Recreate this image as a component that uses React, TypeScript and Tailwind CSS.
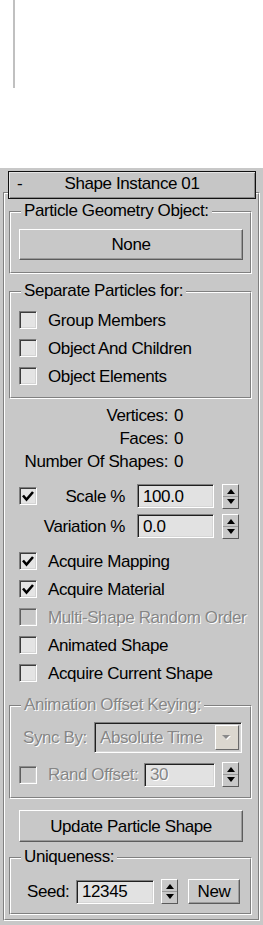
import React from "react";

const OUT = "border border-t-[#808080] border-l-[#808080] border-r-white border-b-white";
const IN = "border border-t-white border-l-white border-r-[#808080] border-b-[#808080]";
const SUNKEN =
  "border border-t-[#808080] border-l-[#808080] border-r-white border-b-white shadow-[inset_1px_1px_0_#202020,inset_-1px_-1px_0_#d6d6d6]";
const RAISED =
  "border border-t-white border-l-white border-r-[#5c5c5c] border-b-[#5c5c5c] shadow-[inset_-1px_-1px_0_#9a9a9a]";
const DIS = "text-[#868686] [text-shadow:1px_1px_0_#ffffff]";

function Group({
  legend,
  disabled,
  h,
  children,
}: {
  legend: string;
  disabled?: boolean;
  h: string;
  children: React.ReactNode;
}) {
  return (
    <div className={`relative ml-[4px] w-[243px] ${OUT}`}>
      <div className={`${h} ${IN}`}>{children}</div>
      <span
        className={`absolute left-[11px] top-[-10px] px-[3px] bg-[#c8c8c8] leading-[18px] ${
          disabled ? DIS : ""
        }`}
      >
        {legend}
      </span>
    </div>
  );
}

function Check({ on, disabled }: { on?: boolean; disabled?: boolean }) {
  return (
    <div
      className={
        disabled
          ? "relative shrink-0 w-[18px] h-[18px] border border-t-[#8c8c8c] border-l-[#8c8c8c] border-r-white border-b-white shadow-[inset_1px_1px_0_#5e5e5e,inset_-1px_-1px_0_#d2d2d2] bg-[#c8c8c8]"
          : "relative shrink-0 w-[18px] h-[18px] border border-t-[#7c7c7c] border-l-[#7c7c7c] border-r-white border-b-white shadow-[inset_1px_1px_0_#3c3c3c,inset_-1px_-1px_0_#d4d4d4] bg-[#e4e4e4]"
      }
    >
      {on && (
        <svg viewBox="0 0 18 18" className="absolute left-[-1px] top-[-1px] w-[18px] h-[18px]">
          <path d="M4 8.5 L7.5 12.5 L14 5" fill="none" stroke="#000" strokeWidth="2.6" />
        </svg>
      )}
    </div>
  );
}

function Spin() {
  return (
    <div
      className={`shrink-0 flex flex-col w-[17px] h-[25px] bg-[#c8c8c8] border border-t-white border-l-white border-r-[#5a5a5a] border-b-[#5a5a5a]`}
    >
      <div className="h-[11px] flex items-end justify-center pb-[2px]">
        <svg width="8" height="5" viewBox="0 0 8 5">
          <polygon points="0,5 4,0 8,5" fill="#000" />
        </svg>
      </div>
      <div className="h-[1px] bg-[#9a9a9a]" />
      <div className="h-[11px] flex items-start justify-center pt-[2px]">
        <svg width="8" height="5" viewBox="0 0 8 5">
          <polygon points="0,0 8,0 4,5" fill="#000" />
        </svg>
      </div>
    </div>
  );
}

function Edit({ w, disabled, children }: { w: string; disabled?: boolean; children: React.ReactNode }) {
  return (
    <div className={`shrink-0 flex items-center h-[24px] pl-[5px] bg-[#e2e2e2] ${SUNKEN} ${w}`}>
      <span className={disabled ? DIS : ""}>{children}</span>
    </div>
  );
}

function Btn({ cls, children }: { cls: string; children: React.ReactNode }) {
  return (
    <div className={`shrink-0 flex items-center justify-center bg-[#c8c8c8] ${RAISED} ${cls}`}>
      {children}
    </div>
  );
}

function Dropdown() {
  return (
    <div className={`shrink-0 flex w-[148px] h-[31px] p-[2px] bg-[#c8c8c8] ${SUNKEN}`}>
      <div className={`flex-1 flex items-center pl-[3px] ${DIS}`}>Absolute Time</div>
      <div
        className={`w-[24px] h-[25px] flex items-center justify-center bg-[#dbd7cf] border border-t-white border-l-white border-r-[#6a6a6a] border-b-[#6a6a6a]`}
      >
        <svg width="10" height="6" viewBox="0 0 10 6">
          <polygon points="1,1 9,1 5,5" fill="#ffffff" />
          <polygon points="0,0 8,0 4,4" fill="#8a8a8a" />
        </svg>
      </div>
    </div>
  );
}

export default function App() {
  const stats: [string, string][] = [
    ["Vertices:", "0"],
    ["Faces:", "0"],
    ["Number Of Shapes:", "0"],
  ];
  const checks: [string, boolean, boolean][] = [
    ["Acquire Mapping", true, false],
    ["Acquire Material", true, false],
    ["Multi-Shape Random Order", false, true],
    ["Animated Shape", false, false],
    ["Acquire Current Shape", false, false],
  ];
  return (
    <div className="w-[263px] h-[925px] overflow-hidden bg-white text-black font-['Liberation_Sans',Arial,sans-serif] text-[17px] tracking-[-0.4px] leading-none">
      <div className="h-[168px]">
        <div className="ml-[13px] w-[2px] h-[88px] bg-[#c0c0c0]" />
      </div>
      <div className="h-[757px] bg-[#c8c8c8] pt-[3px]">
        <div className="relative z-10 ml-[8px] w-[248px] h-[28px] flex items-center pb-[3px] bg-[#c6c6c6] border border-[#101010] shadow-[inset_1px_1px_0_#e4e4e4,inset_-1px_-1px_0_#8a8a8a]">
          <span className="w-[32px] pl-[8px]">-</span>
          <span className="flex-1 text-center">Shape Instance 01</span>
          <span className="w-[32px]" />
        </div>
        <div className={`-mt-[7px] ml-[3px] w-[257px] ${OUT}`}>
          <div className={`h-[727px] ${IN}`}>
            <div className="mt-[17px]">
              <Group legend="Particle Geometry Object:" h="h-[61px]">
                <div className="pt-[16px] pl-[8px]">
                  <Btn cls="w-[224px] h-[31px]">None</Btn>
                </div>
              </Group>
            </div>

            <div className="mt-[17px]">
              <Group legend="Separate Particles for:" h="h-[106px]">
                <div className="pt-[13px] pl-[8px]">
                  {["Group Members", "Object And Children", "Object Elements"].map((t) => (
                    <div key={t} className="flex items-center h-[28px]">
                      <Check />
                      <span className="ml-[11px]">{t}</span>
                    </div>
                  ))}
                </div>
              </Group>
            </div>

            <div className="mt-[5px]">
              {stats.map(([l, v]) => (
                <div key={l} className="flex items-center h-[23px]">
                  <span className="w-[163px] text-right">{l}</span>
                  <span className="ml-[6px]">{v}</span>
                </div>
              ))}
            </div>

            <div className="mt-[8px]">
              <div className="flex items-center h-[30px]">
                <div className="ml-[14px]">
                  <Check on />
                </div>
                <span className="w-[88px] text-right">Scale %</span>
                <div className="ml-[12px]">
                  <Edit w="w-[77px]">100.0</Edit>
                </div>
                <div className="ml-[8px]">
                  <Spin />
                </div>
              </div>
              <div className="flex items-center h-[30px]">
                <span className="ml-[32px] w-[88px] text-right">Variation %</span>
                <div className="ml-[12px]">
                  <Edit w="w-[77px]">0.0</Edit>
                </div>
                <div className="ml-[8px]">
                  <Spin />
                </div>
              </div>
            </div>

            <div className="mt-[6px]">
              {checks.map(([t, on, dis]) => (
                <div key={t} className="flex items-center h-[28px] pl-[14px]">
                  <Check on={on} disabled={dis} />
                  <span className={`ml-[11px] ${dis ? DIS : ""}`}>{t}</span>
                </div>
              ))}
            </div>

            <div className="mt-[18px]">
              <Group legend="Animation Offset Keying:" disabled h="h-[92px]">
                <div className="pt-[15px]">
                  <div className="flex items-center h-[31px]">
                    <span className={`ml-[12px] w-[71px] ${DIS}`}>Sync By:</span>
                    <Dropdown />
                  </div>
                  <div className="mt-[9px] flex items-center h-[25px] pl-[8px]">
                    <Check disabled />
                    <span className={`ml-[11px] w-[96px] ${DIS}`}>Rand Offset:</span>
                    <Edit w="w-[71px]" disabled>
                      30
                    </Edit>
                    <div className="ml-[7px]">
                      <Spin />
                    </div>
                  </div>
                </div>
              </Group>
            </div>

            <div className="mt-[11px] ml-[14px]">
              <Btn cls="w-[224px] h-[32px]">Update Particle Shape</Btn>
            </div>

            <div className="mt-[15px]">
              <Group legend="Uniqueness:" h="h-[56px]">
                <div className="pt-[20px]">
                  <div className="flex items-center h-[25px]">
                    <span className="ml-[16px] w-[49px]">Seed:</span>
                    <Edit w="w-[78px]">12345</Edit>
                    <div className="ml-[7px]">
                      <Spin />
                    </div>
                    <div className="ml-[10px]">
                      <Btn cls="w-[52px] h-[25px]">New</Btn>
                    </div>
                  </div>
                </div>
              </Group>
            </div>
          </div>
        </div>
      </div>
    </div>
  );
}
